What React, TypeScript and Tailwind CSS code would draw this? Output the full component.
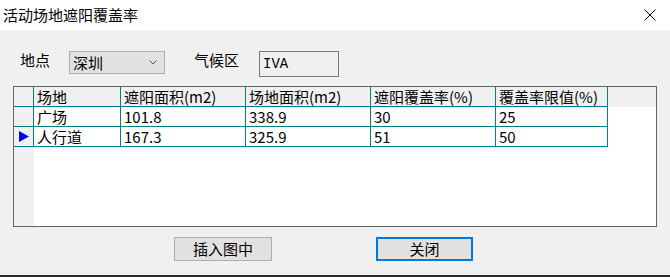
const FONT = { fontFamily: '"Noto Sans CJK SC", "Noto Sans", sans-serif' };

const columns = [
  { key: 'name', title: '场地', w: 'w-[87px]' },
  { key: 'shade', title: '遮阳面积(m2)', w: 'w-[125px]' },
  { key: 'area', title: '场地面积(m2)', w: 'w-[125px]' },
  { key: 'rate', title: '遮阳覆盖率(%)', w: 'w-[125px]' },
  { key: 'limit', title: '覆盖率限值(%)', w: 'w-[112px]' },
];

const rows = [
  { name: '广场', shade: '101.8', area: '338.9', rate: '30', limit: '25' },
  { name: '人行道', shade: '167.3', area: '325.9', rate: '51', limit: '50' },
];

export default function App() {
  return (
    <div className="w-[670px] h-[277px] bg-[#f0f0f0] flex flex-col text-black" style={FONT}>
      {/* title bar */}
      <div className="h-[30px] bg-white flex items-center justify-between pl-[3px] pr-[14px] shrink-0">
        <span className="text-[15px] leading-[20px]">活动场地遮阳覆盖率</span>
        <svg width="12" height="12" viewBox="0 0 12 12">
          <path d="M0.5 0.5 L11.5 11.5 M11.5 0.5 L0.5 11.5" stroke="#000" strokeWidth="1" fill="none" />
        </svg>
      </div>

      <div className="flex-1 px-[13px] flex flex-col">
        {/* location row */}
        <div className="mt-[21px] h-[26px] flex items-start text-[15px]">
          <span className="ml-[7px] w-[49px] leading-[18px]">地点</span>
          <div className="w-[96px] h-[23px] border border-[#adadad] bg-[#e1e1e1] flex items-center justify-between pl-[3px] pr-[7px]">
            <span className="leading-[18px]">深圳</span>
            <svg width="8" height="5" viewBox="0 0 8 5">
              <path d="M0.5 0.5 L4 4 L7.5 0.5" stroke="#555" strokeWidth="1" fill="none" />
            </svg>
          </div>
          <span className="ml-[29px] w-[65px] leading-[18px]">气候区</span>
          <div className="w-[80px] h-[26px] border border-[#7a7a7a] bg-[#f0f0f0] flex items-center pl-[3px]">
            <span className="text-[14px] leading-[16px]" style={{ fontFamily: '"Liberation Mono", monospace' }}>IVA</span>
          </div>
        </div>

        {/* data grid */}
        <div className="mt-[9px] w-[644px] h-[141px] border border-[#646464] bg-white flex flex-col text-[15px]">
          <div className="flex h-[20px] bg-[#f0f0f0]">
            <div className="w-[20px] border-r border-b border-[#008080]" />
            {columns.map((c) => (
              <div key={c.key} className={`${c.w} border-r border-b border-[#008080] pl-[3px] leading-[19px] whitespace-nowrap`}>
                {c.title}
              </div>
            ))}
          </div>
          {rows.map((r, i) => (
            <div key={i} className="flex h-[20px]">
              <div className="w-[20px] bg-[#f0f0f0] border-r border-b border-[#008080] flex items-center pl-[5px]">
                {i === 1 && (
                  <svg width="10" height="11" viewBox="0 0 10 11">
                    <polygon points="0,0 10,5.5 0,11" fill="#0000ff" />
                  </svg>
                )}
              </div>
              {columns.map((c) => (
                <div key={c.key} className={`${c.w} border-r border-b border-[#008080] pl-[3px] leading-[19px] whitespace-nowrap`}>
                  {r[c.key as keyof typeof r]}
                </div>
              ))}
            </div>
          ))}
          <div className="flex-1 flex">
            <div className="w-[20px] bg-[#f0f0f0]" />
            <div className="flex-1" />
          </div>
        </div>

        {/* buttons */}
        <div className="mt-[10px] flex text-[15px]">
          <button className="ml-[161px] w-[98px] h-[24px] border border-[#adadad] bg-[#e1e1e1] flex items-center justify-center leading-[18px]">
            插入图中
          </button>
          <button className="ml-[104px] w-[97px] h-[24px] border-2 border-[#0078d7] bg-[#e1e1e1] flex items-center justify-center leading-[18px]">
            关闭
          </button>
        </div>
      </div>

      <div className="h-[2px] bg-[#2b2b2b] shrink-0" />
    </div>
  );
}
